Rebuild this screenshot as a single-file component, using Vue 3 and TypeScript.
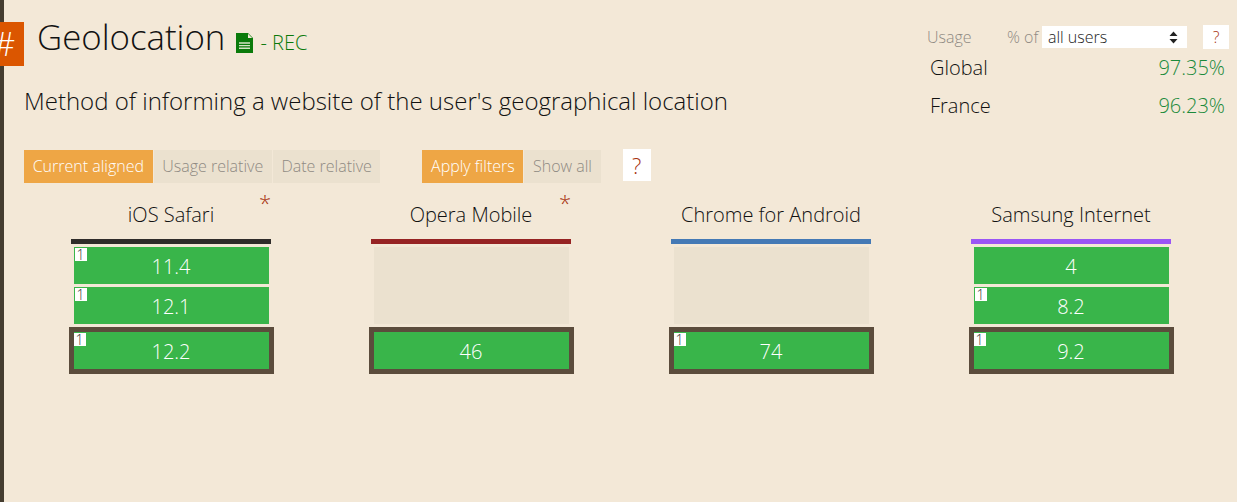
<script setup lang="ts">
interface Version {
  label: string
  note?: boolean
  empty?: boolean
}

interface Browser {
  name: string
  color: string
  asterisk?: boolean
  versions: Version[]
  current: Version
}

const browsers: Browser[] = [
  {
    name: 'iOS Safari',
    color: '#2f2c2a',
    asterisk: true,
    versions: [
      { label: '11.4', note: true },
      { label: '12.1', note: true },
    ],
    current: { label: '12.2', note: true },
  },
  {
    name: 'Opera Mobile',
    color: '#962323',
    asterisk: true,
    versions: [{ label: '', empty: true }],
    current: { label: '46' },
  },
  {
    name: 'Chrome for Android',
    color: '#4479b5',
    versions: [{ label: '', empty: true }],
    current: { label: '74', note: true },
  },
  {
    name: 'Samsung Internet',
    color: '#9a55f5',
    versions: [{ label: '4' }, { label: '8.2', note: true }],
    current: { label: '9.2', note: true },
  },
]
</script>

<template>
  <div class="page">
    <header class="head">
      <div class="head-main">
        <h1 class="title-row">
          <a class="hash"><span>#</span></a>
          <span class="title">Geolocation</span>
          <span class="status">
            <svg class="doc-icon" viewBox="0 0 17 20" width="17" height="20" aria-hidden="true">
              <path d="M0 0H12L17 5V20H0Z" fill="#0a7a0a" />
              <path d="M12 0.8L16.2 5H12Z" fill="#f3e8d7" />
              <path d="M3 10H14M3 12.6H14M3 15.2H14" stroke="#d5e4c4" stroke-width="1.4" />
            </svg>
            <span>- REC</span>
          </span>
        </h1>
        <p class="desc">Method of informing a website of the user's geographical location</p>
      </div>

      <aside class="usage">
        <div class="usage-top">
          <span class="usage-label">Usage</span>
          <span class="usage-of">% of</span>
          <span class="select">
            all users
            <svg class="select-arrows" viewBox="0 0 9 13" width="9" height="13" aria-hidden="true">
              <path d="M4.5 0.5L8.5 5H0.5ZM0.5 8H8.5L4.5 12.5Z" fill="#222" />
            </svg>
          </span>
          <button type="button" class="help small">?</button>
        </div>
        <div class="usage-row first">
          <span>Global</span>
          <span class="pct">97.35%</span>
        </div>
        <div class="usage-row">
          <span>France</span>
          <span class="pct">96.23%</span>
        </div>
      </aside>
    </header>

    <div class="controls">
      <div class="btn-group">
        <button type="button" class="btn active">Current aligned</button>
        <button type="button" class="btn">Usage relative</button>
        <button type="button" class="btn">Date relative</button>
      </div>
      <div class="btn-group">
        <button type="button" class="btn active">Apply filters</button>
        <button type="button" class="btn">Show all</button>
      </div>
      <button type="button" class="help">?</button>
    </div>

    <div class="grid">
      <section v-for="browser in browsers" :key="browser.name" class="col">
        <h2 class="browser-name">
          {{ browser.name }}
          <span v-if="browser.asterisk" class="asterisk">*</span>
        </h2>
        <div class="color-bar" :style="{ background: browser.color }"></div>
        <div class="cells">
          <div
            v-for="(version, index) in browser.versions"
            :key="index"
            class="cell"
            :class="{ empty: version.empty, tall: version.empty }"
          >
            <span v-if="version.note" class="note">1</span>
            {{ version.label }}
          </div>
          <div class="current">
            <div class="cell">
              <span v-if="browser.current.note" class="note">1</span>
              {{ browser.current.label }}
            </div>
          </div>
        </div>
      </section>
    </div>
  </div>
</template>

<style scoped>
.page {
  box-sizing: border-box;
  height: 502px;
  border-left: 4px solid #443d30;
  background: #f3e8d7;
  font-family: 'Open Sans', 'Liberation Sans', sans-serif;
  font-weight: 300;
  color: #111;
}

.head {
  display: flex;
  justify-content: space-between;
  height: 150px;
}

.title-row {
  display: flex;
  align-items: flex-start;
  margin: 0;
  padding-top: 14px;
  font-weight: 300;
}

.hash {
  display: flex;
  align-items: center;
  justify-content: flex-end;
  width: 24px;
  height: 44px;
  margin: 8px 0 0 -4px;
  padding-right: 9px;
  box-sizing: border-box;
  background: #db5600;
  color: #fff;
  font-size: 33px;
  line-height: 44px;
  overflow: hidden;
  flex-shrink: 0;
}

.title {
  margin-left: 13px;
  font-size: 34.8px;
  line-height: 46px;
}

.status {
  display: flex;
  align-items: center;
  gap: 7px;
  margin: 17px 0 0 11px;
  font-size: 20px;
  line-height: 24px;
  color: #0a7a0a;
}

.doc-icon {
  flex-shrink: 0;
}

.desc {
  margin: 19px 0 0 20px;
  font-size: 24px;
  line-height: 32px;
}

.usage {
  width: 302px;
  margin-right: 8px;
  padding-top: 25px;
}

.usage-top {
  display: flex;
  align-items: center;
  height: 24px;
  font-size: 16px;
  color: #8f8a83;
}

.usage-label {
  width: 80px;
}

.usage-of {
  width: 35px;
}

.select {
  display: flex;
  align-items: center;
  justify-content: space-between;
  box-sizing: border-box;
  width: 145px;
  height: 22px;
  padding: 0 9px 0 6px;
  background: #fff;
  color: #222;
  font-size: 16px;
}

.help {
  flex-shrink: 0;
  width: 28px;
  height: 32px;
  margin: -1px 0 0 22px;
  padding: 0;
  border: 0;
  background: #fff;
  color: #a8320f;
  font-family: inherit;
  font-weight: 300;
  font-size: 22px;
}

.help.small {
  width: 26px;
  height: 24px;
  margin: 0 0 0 16px;
  font-size: 16px;
}

.usage-row {
  display: flex;
  justify-content: space-between;
  margin: 14px 4px 0 3px;
  font-size: 20px;
  line-height: 24px;
}

.usage-row.first {
  margin-top: 7px;
}

.pct {
  color: #1a8a3a;
}

.controls {
  display: flex;
  align-items: flex-start;
  height: 34px;
  padding-left: 20px;
}

.btn-group {
  display: flex;
  gap: 1px;
  margin-right: 42px;
}

.btn-group + .btn-group {
  margin-right: 0;
}

.btn {
  height: 33px;
  padding: 0 8.65px 2px;
  border: 0;
  background: #ebe1cf;
  color: #8f8a83;
  font-family: inherit;
  font-weight: 300;
  font-size: 16px;
  white-space: nowrap;
}

.btn.active {
  background: #eea645;
  color: #fff;
}

.grid {
  display: flex;
  padding-left: 17px;
}

.col {
  width: 300px;
  display: flex;
  flex-direction: column;
  align-items: center;
}

.browser-name {
  position: relative;
  width: 200px;
  margin: 0;
  padding-top: 17px;
  height: 55px;
  box-sizing: border-box;
  font-size: 20px;
  font-weight: 300;
  line-height: 28px;
  text-align: center;
  white-space: nowrap;
}

.asterisk {
  position: absolute;
  top: 4px;
  right: 0;
  color: #a8320f;
  font-size: 22px;
  line-height: 28px;
}

.color-bar {
  width: 200px;
  height: 5px;
}

.cells {
  display: flex;
  flex-direction: column;
  align-items: center;
  gap: 3px;
  margin-top: 3px;
}

.cell {
  position: relative;
  box-sizing: border-box;
  width: 195px;
  height: 37px;
  background: #39b54a;
  color: #fff;
  font-size: 20px;
  line-height: 40px;
  text-align: center;
}

.cell.empty {
  background: #ebe1cf;
}

.cell.tall {
  height: 77px;
}

.current {
  border: 5px solid #5b4c3c;
}

.note {
  position: absolute;
  top: 1px;
  left: 1px;
  width: 12px;
  height: 13px;
  background: #fff;
  color: #333;
  font-size: 14px;
  font-weight: 300;
  line-height: 13px;
  text-align: center;
}

.current .note {
  top: 1px;
  left: 0;
}
</style>
